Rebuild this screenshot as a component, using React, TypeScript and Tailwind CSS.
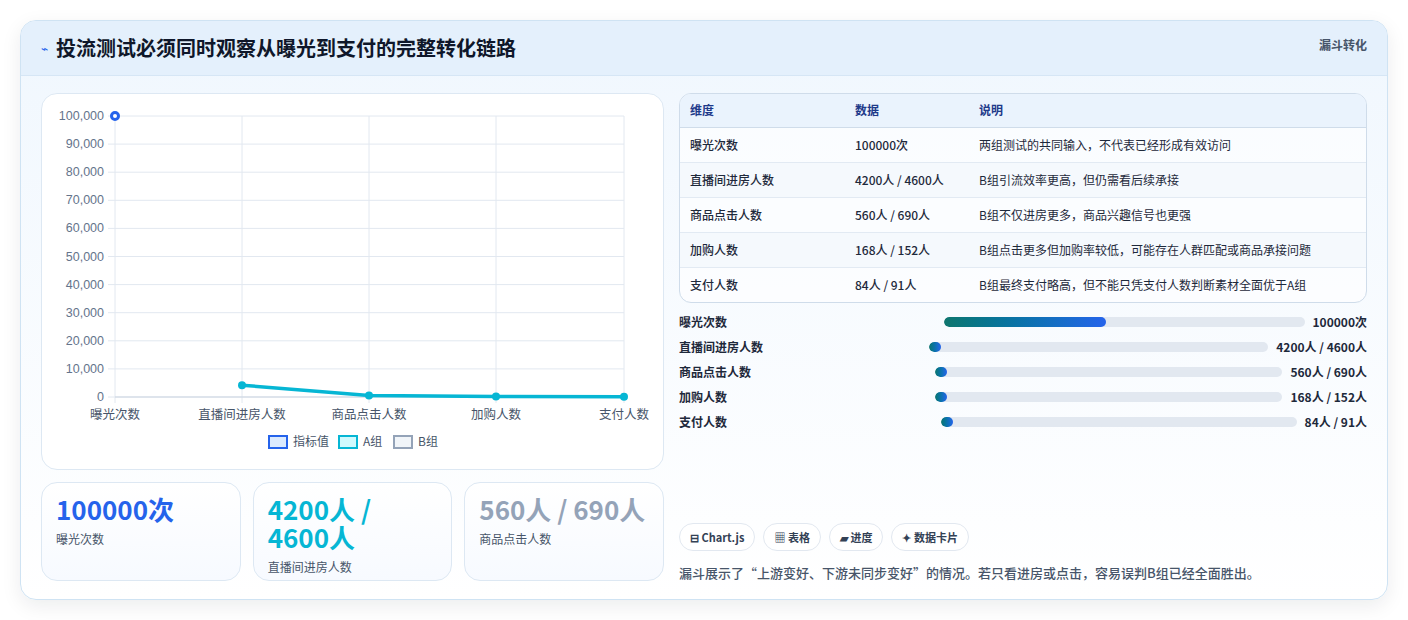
const font = { fontFamily: '"Noto Sans CJK SC", "Noto Sans", sans-serif' };

const rows = [
  ['曝光次数', '100000次', '两组测试的共同输入，不代表已经形成有效访问'],
  ['直播间进房人数', '4200人 / 4600人', 'B组引流效率更高，但仍需看后续承接'],
  ['商品点击人数', '560人 / 690人', 'B组不仅进房更多，商品兴趣信号也更强'],
  ['加购人数', '168人 / 152人', 'B组点击更多但加购率较低，可能存在人群匹配或商品承接问题'],
  ['支付人数', '84人 / 91人', 'B组最终支付略高，但不能只凭支付人数判断素材全面优于A组'],
];

const bars = [
  ['曝光次数', '100000次', 45],
  ['直播间进房人数', '4200人 / 4600人', 3],
  ['商品点击人数', '560人 / 690人', 3],
  ['加购人数', '168人 / 152人', 3],
  ['支付人数', '84人 / 91人', 3],
] as const;

function Chart() {
  const X = [73, 200, 327, 454, 582];
  const y = (v: number) => 22 + 281 * (1 - v / 100000);
  const labels = ['曝光次数', '直播间进房人数', '商品点击人数', '加购人数', '支付人数'];
  const a = [4200, 560, 168, 84];
  return (
    <svg width="622" height="372" className="block">
      {Array.from({ length: 11 }).map((_, i) => {
        const v = 100000 - i * 10000;
        return (
          <g key={i}>
            <line x1={66} x2={582} y1={y(v)} y2={y(v)} stroke="#e2e8f0" />
            <text x={62} y={y(v) + 4} textAnchor="end" fontSize="12.5" fill="#64748b" fontFamily="Liberation Sans, sans-serif">
              {v.toLocaleString('en-US')}
            </text>
          </g>
        );
      })}
      {X.map((x, i) => (
        <g key={i}>
          <line x1={x} x2={x} y1={22} y2={y(0) + 6} stroke="#e2e8f0" />
          <text x={x} y={y(0) + 22} textAnchor="middle" fontSize="12.5" fill="#475569">{labels[i]}</text>
        </g>
      ))}
      <line x1={73} x2={582} y1={y(0)} y2={y(0)} stroke="#cbd5e1" />
      <circle cx={73} cy={y(100000)} r={3.5} fill="#fff" stroke="#2563eb" strokeWidth={3} />
      <polyline points={a.map((v, i) => `${X[i + 1]},${y(v)}`).join(' ')} fill="none" stroke="#06b6d4" strokeWidth={3.5} />
      {a.map((v, i) => <circle key={i} cx={X[i + 1]} cy={y(v)} r={4} fill="#06b6d4" />)}
      <g fontSize="12" fill="#475569">
        <rect x={227} y={342} width={18} height={12} fill="#dbeafe" stroke="#2563eb" strokeWidth={2} />
        <text x={251} y={352}>指标值</text>
        <rect x={297} y={342} width={18} height={12} fill="#cffafe" stroke="#06b6d4" strokeWidth={2} />
        <text x={321} y={352}>A组</text>
        <rect x={352} y={342} width={18} height={12} fill="#f1f5f9" stroke="#94a3b8" strokeWidth={2} />
        <text x={376} y={352}>B组</text>
      </g>
    </svg>
  );
}

export default function App() {
  return (
    <div className="w-[1408px] h-[620px] bg-white pt-5 px-5" style={font}>
      <div className="rounded-2xl border border-[#cfe3f3] bg-gradient-to-b from-[#f0f7fe] to-white shadow-[0_6px_20px_rgba(15,23,42,0.08)] overflow-hidden h-[580px]">
        <div className="h-[55px] bg-[#e4f0fc] border-b border-[#d6e6f5] flex items-center justify-between px-5">
          <div className="flex items-center gap-2">
            <span className="text-[#2563eb] text-xs">⌁</span>
            <span className="text-[20px] font-bold text-[#0f172a]">投流测试必须同时观察从曝光到支付的完整转化链路</span>
          </div>
          <span className="text-xs font-semibold text-[#475569] self-start mt-4">漏斗转化</span>
        </div>
        <div className="flex gap-[15px] px-5 pt-[17px]">
          <div className="w-[623px] flex flex-col gap-3">
            <div className="h-[377px] bg-white rounded-2xl border border-[#dde8f3]">
              <Chart />
            </div>
            <div className="grid grid-cols-3 gap-3">
              {[
                ['100000次', '曝光次数', 'text-[#2563eb]'],
                ['4200人 / 4600人', '直播间进房人数', 'text-[#06b6d4]'],
                ['560人 / 690人', '商品点击人数', 'text-[#94a3b8]'],
              ].map(([v, l, c]) => (
                <div key={l} className="h-[99px] rounded-2xl border border-[#dde8f3] bg-gradient-to-b from-white to-[#f7faff] px-3.5 pt-3">
                  <div className={`text-[26px] leading-[28px] font-bold max-w-[175px] ${c}`}>{v}</div>
                  <div className="text-xs text-[#475569] mt-2">{l}</div>
                </div>
              ))}
            </div>
          </div>
          <div className="flex-1 flex flex-col">
            <div className="rounded-xl border border-[#cfdcea] overflow-hidden bg-white/60">
              <table className="w-full text-xs text-[#1e293b]">
                <thead>
                  <tr className="bg-[#eaf3fd] text-[#1e3a8a] h-[33px] border-b border-[#cfdcea]">
                    <th className="text-left font-semibold pl-2.5 w-[175px]">维度</th>
                    <th className="text-left font-semibold w-[124px]">数据</th>
                    <th className="text-left font-semibold">说明</th>
                  </tr>
                </thead>
                <tbody>
                  {rows.map((r, i) => (
                    <tr key={i} className={`h-[35px] ${i < 4 ? 'border-b border-[#e2eaf3]' : ''} ${i % 2 ? 'bg-[#f5f9fd]' : ''}`}>
                      <td className="pl-2.5 font-medium">{r[0]}</td>
                      <td className="font-medium">{r[1]}</td>
                      <td>{r[2]}</td>
                    </tr>
                  ))}
                </tbody>
              </table>
            </div>
            <div className="flex flex-col gap-[7px] mt-[10px]">
              {bars.map(([l, v, p]) => (
                <div key={l} className="flex items-center gap-2 h-[18px] text-xs font-semibold text-[#1e293b]">
                  <div className="flex-[5]">{l}</div>
                  <div className="flex-[7] h-[10px] rounded-full bg-[#e2e8f0] overflow-hidden">
                    <div className="h-full rounded-full bg-gradient-to-r from-[#0f766e] to-[#2563eb] min-w-[12px]" style={{ width: `${p}%` }} />
                  </div>
                  <div className="whitespace-nowrap">{v}</div>
                </div>
              ))}
            </div>
            <div className="flex gap-2 mt-[92px]">
              {['⊟ Chart.js', '▦ 表格', '▰ 进度', '✦ 数据卡片'].map((t) => (
                <span key={t} className="px-2.5 h-[28px] flex items-center rounded-full border border-[#e2e8f0] bg-white text-[11px] font-semibold text-[#334155]">{t}</span>
              ))}
            </div>
            <div className="text-[13px] text-[#475569] mt-3 font-medium">漏斗展示了“上游变好、下游未同步变好”的情况。若只看进房或点击，容易误判B组已经全面胜出。</div>
          </div>
        </div>
      </div>
    </div>
  );
}
